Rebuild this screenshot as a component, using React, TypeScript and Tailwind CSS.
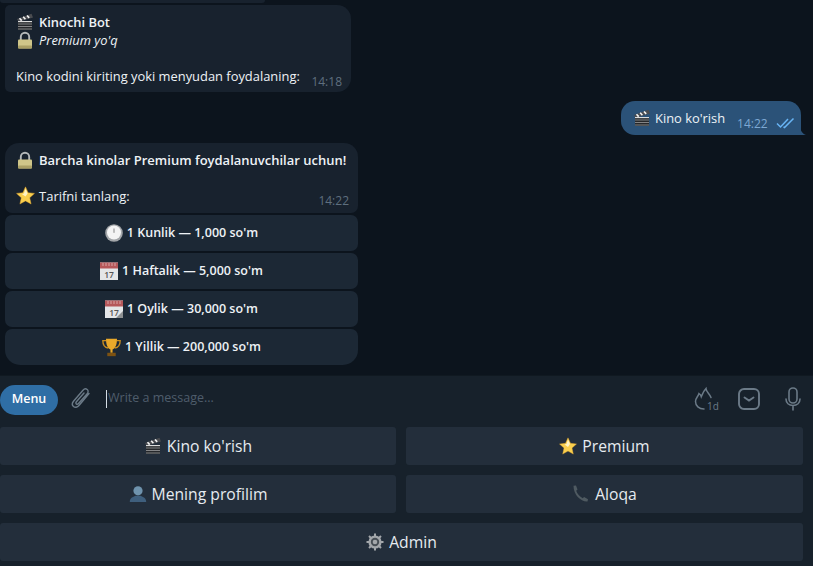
import React from "react";

const Clapper = ({ s = 18 }: { s?: number }) => (
  <svg width={s} height={s} viewBox="0 0 18 18" className="shrink-0">
    <rect x="2" y="8.500" width="14" height="8.500" fill="#26282b" />
    <path d="M2 11h14M2 13.500h14M2 16h14" stroke="#8d8f91" strokeWidth="0.9" />
    <path d="M1 6 15.500 .8 17 4.500 2.500 8.800z" fill="#4a4c50" />
    <path d="M3.500 5.200l2.200 2.400M7.200 3.800l2.200 2.500M11 2.500l2.200 2.400" stroke="#f4f4f4" strokeWidth="1.600" />
    <path d="M2 8.600h14" stroke="#e6e6e6" strokeWidth="1.100" />
  </svg>
);
const Lock = ({ s = 18 }: { s?: number }) => (
  <svg width={s} height={s} viewBox="0 0 18 18" className="shrink-0">
    <path d="M4.800 9V6a4.200 4.200 0 0 1 8.400 0v3" fill="none" stroke="#b4b8ba" strokeWidth="1.900" />
    <rect x="2" y="8.500" width="14" height="9" rx="1" fill="#cfc68a" />
    <rect x="2" y="14.500" width="14" height="3" rx="1" fill="#aaa066" />
  </svg>
);
const Star = ({ s = 19 }: { s?: number }) => (
  <svg width={s} height={s} viewBox="0 0 18 18" className="shrink-0">
    <path d="M9 .8l2.500 5.500 6 .7-4.500 4.100 1.300 6L9 14.100l-5.300 3 1.300-6L.5 7l6-.7z" fill="#f9cf4e" stroke="#e7a92f" strokeWidth="0.4" />
    <path d="M9 2.500l2 4.600L9 10 5.500 7.500l2-.4z" fill="#fff3c4" />
  </svg>
);
const Clock = () => (
  <svg width="18" height="18" viewBox="0 0 18 18" className="shrink-0">
    <circle cx="9" cy="9" r="8.800" fill="#a3a6a9" />
    <circle cx="9" cy="8.500" r="7" fill="#f4f4f4" />
    <path d="M9 4.500V8.800" stroke="#888" strokeWidth="1" />
  </svg>
);
const Calendar = ({ tear = false }: { tear?: boolean }) => (
  <svg width="18" height="18" viewBox="0 0 18 18" className="shrink-0">
    <rect x="0" y="0.500" width="18" height="17.500" fill="#e4e6e8" />
    <rect x="0" y="0.500" width="18" height="6" fill="#b5575a" />
    <path d="M3 1v3M6 1v3M9 1v3M12 1v3M15 1v3" stroke="#e8c9c9" strokeWidth="0.7" />
    <text x="9" y="15.500" textAnchor="middle" fontSize="8.500" fontWeight="600" fill="#555" fontFamily="'Open Sans',sans-serif">17</text>
    {tear && <path d="M11 18 18 11v7z" fill="#8d8f91" />}
  </svg>
);
const Trophy = () => (
  <svg width="19" height="19" viewBox="0 0 18 18" className="shrink-0">
    <path d="M4 2.500H.8c0 4 2.200 6.500 5.200 7M14 2.500h3.200c0 4-2.200 6.500-5.200 7" fill="none" stroke="#c98d1e" strokeWidth="1.300" />
    <path d="M3.800.8h10.400c0 6-1.700 9.200-4.200 10.200v3H8v-3C5.500 10 3.800 6.800 3.800.8z" fill="#eaa92a" />
    <rect x="5" y="14" width="8" height="3.200" fill="#7d5212" />
  </svg>
);
const Bust = () => (
  <svg width="18" height="18" viewBox="0 0 18 18" className="shrink-0">
    <circle cx="9" cy="5.800" r="4.600" fill="#6f93ad" />
    <path d="M.8 17c0-4 3-5 5.700-6.200h5C14.200 12 17.200 13 17.200 17z" fill="#3f5f7d" />
  </svg>
);
const Phone = () => (
  <svg width="18" height="18" viewBox="0 0 18 18" className="shrink-0">
    <path d="M1.500 .8 4 .5l1.500 4-1.300 1.200c1 3 3.500 6 6.500 7.500l1.400-1.300 3.900 2.400-.5 2.200C9 17 1.500 10 1.500 .8z" fill="#4f5a61" />
  </svg>
);
const Gear = () => (
  <svg width="18" height="18" viewBox="0 0 18 18" className="shrink-0">
    <circle cx="9" cy="9" r="6.600" fill="#a3a7ab" />
    <g stroke="#a3a7ab" strokeWidth="2">
      <path d="M9 .5v17M.5 9h17M3 3l12 12M15 3 3 15" />
    </g>
    <circle cx="9" cy="9" r="4.200" fill="#474e55" />
    <circle cx="9" cy="9" r="2.300" fill="#a3a7ab" />
  </svg>
);

const Tariff = ({ icon, label, last }: { icon: React.ReactNode; label: string; last?: boolean }) => (
  <div className={`h-9 flex items-center justify-center gap-[4px] bg-[#1c2835] text-[#eef2f6] text-[12.500px] font-semibold rounded-t-[7px] ${last ? "rounded-b-[15px]" : "rounded-b-[7px]"}`}>
    {icon}
    <span>{label}</span>
  </div>
);

const Key = ({ icon, label, className = "flex-1" }: { icon: React.ReactNode; label: string; className?: string }) => (
  <div className={`h-[38px] flex items-center justify-center gap-[5px] bg-[#232e3b] rounded-[3px] text-[#e6ebf0] text-[15.700px] font-medium ${className}`}>
    {icon}
    <span className="translate-y-[1px]">{label}</span>
  </div>
);

export default function App() {
  return (
    <div className="w-[813px] h-[566px] overflow-hidden flex flex-col bg-[#17212b] text-[#eef2f6]" style={{ fontFamily: "'Open Sans', sans-serif" }}>
      {/* chat */}
      <div className="h-[375px] shrink-0 bg-[#0c141d] flex flex-col">
        <div className="h-[3px] w-[265px] bg-[#18222e] rounded-b-[6px]" />
        {/* bubble 1 */}
        <div className="mt-[2px] ml-[5px] w-[346px] h-[87px] bg-[#18222e] rounded-[14px] rounded-bl-[5px] rounded-tl-[5px] pl-[11px] pr-[9px] pt-[8px] flex flex-col text-[12.900px] leading-[18px]">
          <div className="flex items-center gap-[5px] font-semibold"><Clapper /><span>Kinochi Bot</span></div>
          <div className="flex items-center gap-[5px] italic"><Lock /><span>Premium yo'q</span></div>
          <div className="mt-[18px] flex items-center justify-between">
            <span>Kino kodini kiriting yoki menyudan foydalaning:</span>
            <span className="text-[12px] text-[#5f6f7e] translate-y-[6px]">14:18</span>
          </div>
        </div>
        {/* own bubble */}
        <div className="mt-[9px] ml-[621px] w-[180px] h-[34px] bg-[#2b5278] rounded-[14px] rounded-br-none pl-[12px] pr-[6px] flex items-center text-[12.900px] relative">
          <Clapper />
          <span className="ml-[4px] translate-y-[1px]">Kino ko'rish</span>
          <span className="ml-[12px] mt-[11px] text-[12px] text-[#7da8d3]">14:22</span>
          <svg width="19" height="13" viewBox="0 0 19 13" className="ml-[8px] mt-[9px]" fill="none" stroke="#68b4f4" strokeWidth="1.500">
            <path d="M1 7.500l3.500 3.500L12 3M7.500 11l1 .5L17.500 2.500" />
          </svg>
          <svg width="7" height="8" viewBox="0 0 7 8" className="absolute right-[-6px] bottom-0"><path d="M0 0c.5 4 3 7 6 8H0z" fill="#2b5278" /></svg>
        </div>
        {/* bubble 2 */}
        <div className="mt-2 ml-[5px] w-[353px] flex flex-col gap-[2px]">
          <div className="w-full h-[70px] bg-[#18222e] rounded-t-[14px] rounded-b-[7px] pl-[11px] pr-[9px] pt-[8px] text-[13px] leading-[18px]">
            <div className="flex items-center gap-[5px] font-semibold whitespace-nowrap"><Lock /><span>Barcha kinolar Premium foydalanuvchilar uchun!</span></div>
            <div className="mt-[17px] flex items-center justify-between">
              <div className="flex items-center gap-[4px]"><Star /><span>Tarifni tanlang:</span></div>
              <span className="text-[12px] text-[#5f6f7e] translate-y-[5px]">14:22</span>
            </div>
          </div>
          <Tariff icon={<Clock />} label="1 Kunlik — 1,000 so'm" />
          <Tariff icon={<Calendar />} label="1 Haftalik — 5,000 so'm" />
          <Tariff icon={<Calendar tear />} label="1 Oylik — 30,000 so'm" />
          <Tariff icon={<Trophy />} label="1 Yillik — 200,000 so'm" last />
        </div>
      </div>

      {/* composer */}
      <div className="h-[46px] shrink-0 flex items-center border-t border-[#101921]">
        <div className="w-[58px] h-[30px] translate-y-[1px] rounded-full bg-[#2f6ea5] flex items-center justify-center text-white text-[12.500px] font-semibold">Menu</div>
        <svg width="24" height="24" viewBox="0 0 24 24" fill="none" stroke="#6b7a87" strokeWidth="1.400" strokeLinecap="round" className="ml-[11px]">
          <path d="M20 6.500 10 18.500c-1.700 2-4 2.300-5.500 1s-1.500-3.500.2-5.500L14 3.200c1.200-1.400 3-1.700 4.200-.7s1.200 2.700 0 4.100L9.500 16.500c-.7.800-1.600 1-2.200.5s-.6-1.400.1-2.200L15 6" />
        </svg>
        <div className="ml-[13px] w-px h-[18px] bg-[#d5dde5]" />
        <span className="ml-[1px] text-[12.500px] text-[#4f5d6b]">Write a message...</span>
        <div className="ml-auto flex items-center">
          <svg width="26" height="26" viewBox="0 0 26 26" fill="none" stroke="#6b7a87" strokeWidth="1.500" className="mr-[18px]">
            <path d="M11 23C6 23 2.500 20 2.500 15.500c0-3.500 2.500-4.500 3.500-8 1.200.8 2 2 2.300 3.200C9.500 8 10.500 5 13 2.500c.3 3.500 3.500 5 5 9" strokeLinecap="round" />
            <text x="14" y="24" fontSize="10" fill="#6b7a87" stroke="none" fontFamily="'Open Sans',sans-serif">1d</text>
          </svg>
          <svg width="24" height="24" viewBox="0 0 24 24" fill="none" stroke="#6b7a87" strokeWidth="1.900" className="mr-[20px]">
            <rect x="2" y="2" width="20" height="20" rx="5" />
            <path d="M7.500 10.500l4.500 3 4.500-3" strokeLinecap="round" />
          </svg>
          <svg width="24" height="24" viewBox="0 0 24 24" fill="none" stroke="#6b7a87" strokeWidth="1.600" strokeLinecap="round" className="mr-[8px]">
            <rect x="8" y="1" width="8" height="15" rx="4" />
            <path d="M5 12c0 4 3 6.500 7 6.500s7-2.500 7-6.500M12 18.500V23" />
          </svg>
        </div>
      </div>

      {/* keyboard */}
      <div className="flex flex-col gap-[10px] pr-[10px] pt-[6px]">
        <div className="flex gap-[10px]">
          <Key className="w-[396px]" icon={<Clapper />} label="Kino ko'rish" />
          <Key icon={<Star s={18} />} label="Premium" />
        </div>
        <div className="flex gap-[10px]">
          <Key className="w-[396px]" icon={<Bust />} label="Mening profilim" />
          <Key icon={<Phone />} label="Aloqa" />
        </div>
        <div className="flex">
          <Key icon={<Gear />} label="Admin" />
        </div>
      </div>
    </div>
  );
}
